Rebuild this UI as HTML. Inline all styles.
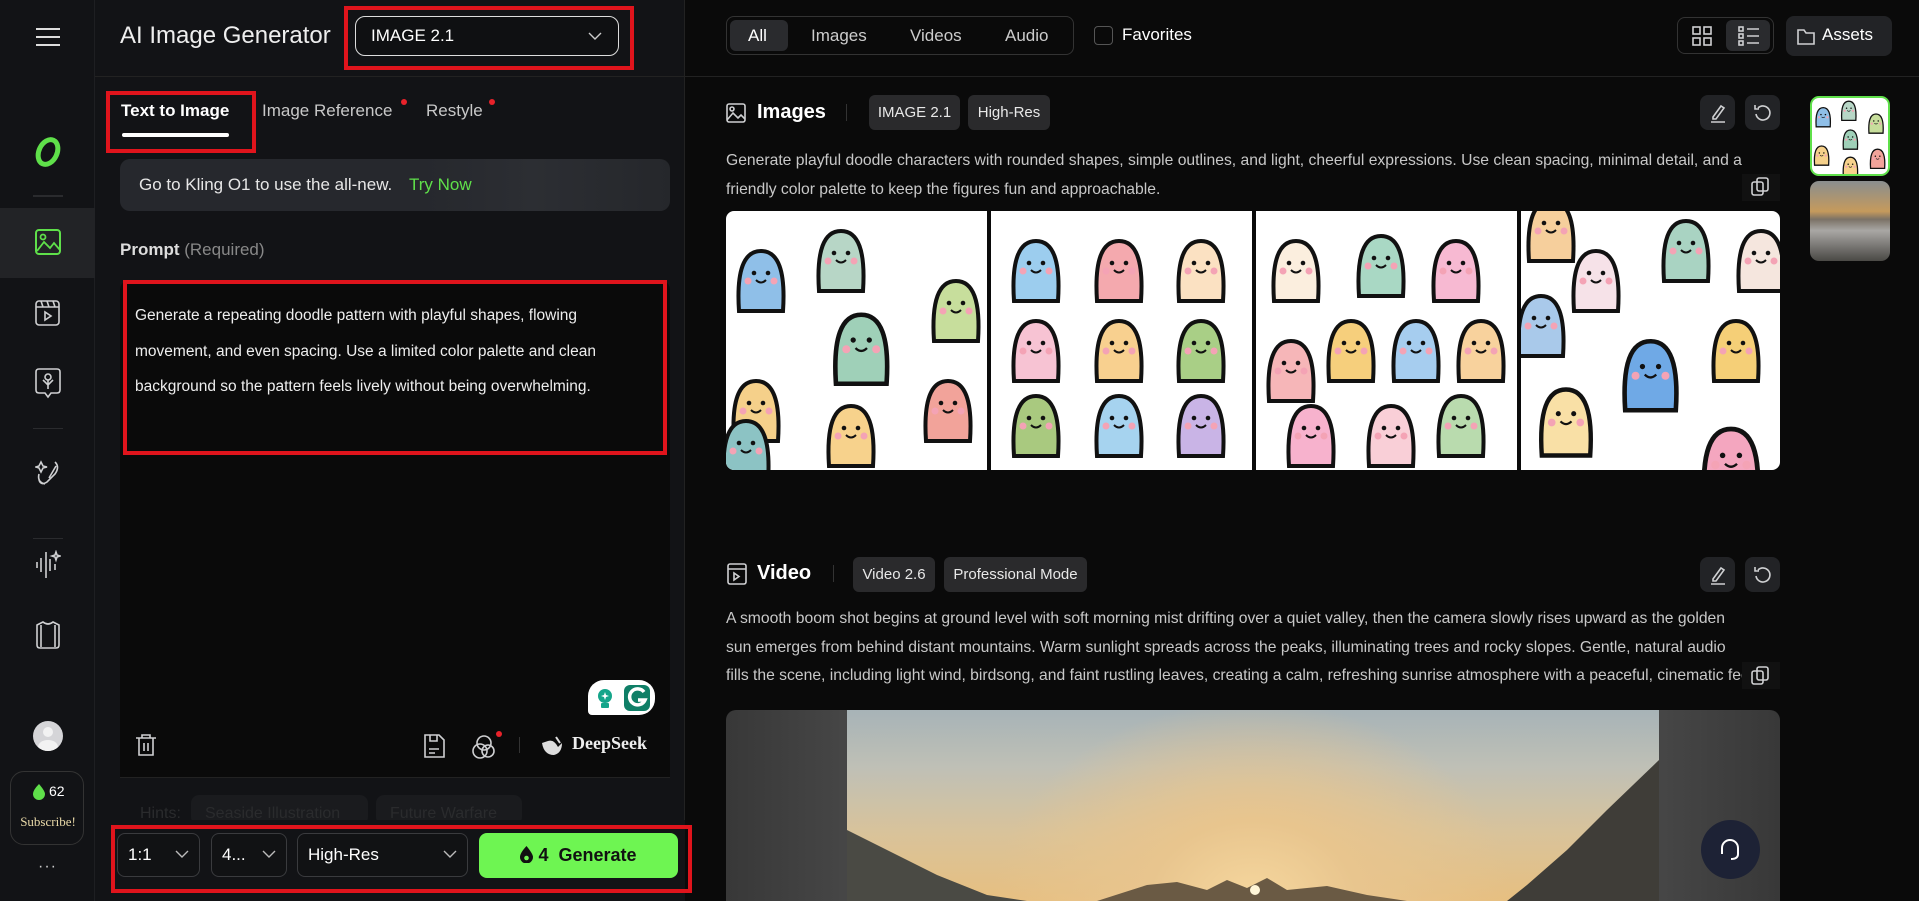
<!DOCTYPE html>
<html><head><meta charset="utf-8">
<style>
*{box-sizing:border-box;margin:0;padding:0}
body{width:1919px;height:901px;overflow:hidden;background:#0a0a0a;font-family:"Liberation Sans",sans-serif;color:#fff;position:relative}
.a{position:absolute}
.side{left:0;top:0;width:95px;height:901px;background:#121316;border-right:1px solid #1e1f22}
.lp{left:95px;top:0;width:590px;height:901px;background:#121316;border-right:1px solid #222}
.red{position:absolute;border:4px solid #e0141c}
.ic{stroke:#cfd0d2;fill:none;stroke-width:1.6}
.tag{position:absolute;background:#2a2a2c;border-radius:6px;color:#e8e8e8;font-size:15px;line-height:35px;text-align:center}
.btn{position:absolute;background:#222326;border-radius:8px}
.sel{position:absolute;top:833px;height:44px;border:1px solid #3a3b3e;border-radius:8px;background:#111214;font-size:17px;color:#fff;line-height:42px;padding-left:10px}
.sel svg{position:absolute;right:10px;top:16px}
.img{position:absolute;top:211px;width:261px;height:259px;background:#fff;overflow:hidden}
</style></head><body>

<!-- sidebar -->
<div class="a side">
 <svg class="a" style="left:35px;top:27px" width="26" height="20"><path d="M1 2H25M1 10H25M1 18H25" stroke="#ddd" stroke-width="2"/></svg>
 <svg class="a" style="left:33px;top:136px" width="30" height="32"><ellipse cx="15" cy="16" rx="9" ry="13" transform="rotate(25 15 16)" fill="none" stroke="#5fe04a" stroke-width="5"/></svg>
 <div class="a" style="left:33px;top:195px;width:30px;height:2px;background:#2a2b2e"></div>
 <div class="a" style="left:0;top:208px;width:95px;height:70px;background:#222326"></div>
 <svg class="a" style="left:35px;top:229px" width="26" height="26"><rect x="1" y="1" width="24" height="24" rx="3" fill="none" stroke="#5fe04a" stroke-width="2"/><circle cx="8" cy="8" r="2.5" fill="none" stroke="#5fe04a" stroke-width="1.8"/><path d="M2 22L9 13L15 19L19 14L25 21" fill="none" stroke="#5fe04a" stroke-width="1.8"/></svg>
 <svg class="a" style="left:35px;top:299px" width="26" height="28"><rect x="1" y="2" width="23" height="24" rx="3" class="ic"/><path d="M1 8H24M6 2L8 8M12 2L14 8M18 2L20 8M10 13V21L16 17Z" class="ic"/></svg>
 <svg class="a" style="left:35px;top:368px" width="26" height="32"><path d="M4 1H22Q25 1 25 4V22Q25 25 22 25H16L13 29L10 25H4Q1 25 1 22V4Q1 1 4 1Z" class="ic"/><circle cx="13" cy="9" r="3" class="ic"/><path d="M13 12V21M8 12L13 17L18 12" class="ic"/></svg>
 <div class="a" style="left:33px;top:428px;width:30px;height:1px;background:#2a2b2e"></div>
 <svg class="a" style="left:35px;top:458px" width="26" height="28"><path d="M6 4L8 8L12 9L8 10L6 14L4 10L1 9L4 8ZM20 4Q25 9 20 16L12 24Q6 28 4 22M14 20L21 8M10 26Q2 24 4 16" class="ic"/></svg>
 <div class="a" style="left:33px;top:538px;width:30px;height:1px;background:#2a2b2e"></div>
 <svg class="a" style="left:35px;top:550px" width="26" height="30"><path d="M2 12V18M6 8V22M11 2V28M15 9V21M20 14V20M21 2L22 5L25 6L22 7L21 10L20 7L17 6L20 5Z" class="ic"/></svg>
 <svg class="a" style="left:35px;top:620px" width="26" height="30"><path d="M8 2Q13 6 18 2L24 5V25Q24 28 21 28H5Q2 28 2 25V5ZM6 5V27M20 5V27" class="ic"/></svg>
 <div class="a" style="left:33px;top:721px;width:30px;height:30px;border-radius:50%;background:#d5d5d8;overflow:hidden"><div class="a" style="left:10px;top:6px;width:10px;height:10px;border-radius:50%;background:#f2f2f2"></div><div class="a" style="left:5px;top:19px;width:20px;height:14px;border-radius:50%;background:#f2f2f2"></div></div>
 <div class="a" style="left:10px;top:771px;width:74px;height:74px;border:1px solid #333;border-radius:14px">
  <svg class="a" style="left:22px;top:12px" width="12" height="16"><path d="M6 0Q12 7 12 10A6 6 0 0 1 0 10Q0 6 6 0Z" fill="#5fe04a"/></svg>
  <div class="a" style="left:38px;top:11px;font-size:14px">62</div>
  <div class="a" style="left:0;width:74px;top:42px;text-align:center;font-family:'Liberation Serif',serif;font-size:13px;color:#e9d9a8">Subscribe!</div>
 </div>
 <div class="a" style="left:38px;top:858px;font-size:16px;letter-spacing:1px;color:#ccc">···</div>
</div>

<!-- left panel -->
<div class="a lp"></div>
<div class="a" style="left:95px;top:76px;width:590px;height:1px;background:#222"></div>
<div class="a" style="left:120px;top:22px;font-size:24px;color:#eee">AI Image Generator</div>
<div class="a" style="left:355px;top:16px;width:264px;height:40px;border:1.5px solid #ddd;border-radius:10px;background:#0f1012;font-size:17px;line-height:37px;padding-left:15px">IMAGE 2.1
 <svg class="a" style="right:16px;top:15px" width="14" height="9"><path d="M1 1L7 7L13 1" stroke="#ccc" fill="none" stroke-width="1.4"/></svg></div>
<div class="red" style="left:344px;top:6px;width:290px;height:64px"></div>

<div class="a" style="left:121px;top:101px;font-size:17px;font-weight:bold">Text to Image</div>
<div class="a" style="left:122px;top:133px;width:107px;height:4px;border-radius:2px;background:#fff"></div>
<div class="red" style="left:106px;top:91px;width:150px;height:62px"></div>
<div class="a" style="left:262px;top:101px;font-size:17px;color:#c8c8c8">Image Reference</div>
<div class="a" style="left:401px;top:99px;width:6px;height:6px;border-radius:50%;background:#e8222a"></div>
<div class="a" style="left:426px;top:101px;font-size:17px;color:#c8c8c8">Restyle</div>
<div class="a" style="left:489px;top:99px;width:6px;height:6px;border-radius:50%;background:#e8222a"></div>

<div class="a" style="left:120px;top:159px;width:550px;height:52px;border-radius:10px;background:linear-gradient(90deg,#26282d 0%,#26282d 55%,#2c2e33 75%,#25272b 100%);font-size:17px;line-height:52px;padding-left:19px;color:#e6e6e6">Go to Kling O1 to use the all-new. <span style="color:#5fe04a;margin-left:12px">Try Now</span></div>

<div class="a" style="left:120px;top:240px;font-size:17px;font-weight:bold;color:#ddd">Prompt <span style="font-weight:normal;color:#888">(Required)</span></div>

<div class="a" style="left:120px;top:280px;width:550px;height:497px;background:#0a0a0a;border-radius:10px 10px 0 0"></div>
<div class="a" style="left:135px;top:298px;width:520px;font-size:15.5px;line-height:35.5px;color:#eee">Generate a repeating doodle pattern with playful shapes, flowing movement, and even spacing. Use a limited color palette and clean background so the pattern feels lively without being overwhelming.</div>
<div class="red" style="left:123px;top:280px;width:544px;height:175px"></div>

<div class="a" style="left:588px;top:680px;width:67px;height:35px;background:#fff;border-radius:16px 16px 16px 4px"></div>
<svg class="a" style="left:594px;top:684px" width="60" height="28"><circle cx="11" cy="12" r="7" fill="#15a58a"/><rect x="7" y="19" width="8" height="5" rx="1" fill="#15a58a"/><path d="M11 8L12 11L15 12L12 13L11 16L10 13L7 12L10 11Z" fill="#fff"/><rect x="30" y="1" width="26" height="26" rx="6" fill="#0f7f67"/><path d="M50 8A8 8 0 1 0 51 16H44" stroke="#fff" stroke-width="3.5" fill="none"/></svg>

<svg class="a" style="left:135px;top:733px" width="22" height="24"><path d="M1 5H21M7 5V2H15V5M4 5V22H18V5M9 10V18M13 10V18" class="ic" stroke-width="1.8"/></svg>
<svg class="a" style="left:423px;top:734px" width="22" height="24"><path d="M2 1H16L21 6V23H2ZM7 1V7H14V1M6 15H16M6 19H12" class="ic" stroke-width="1.8"/></svg>
<svg class="a" style="left:472px;top:734px" width="24" height="26"><circle cx="12" cy="9" r="7" class="ic" stroke-width="1.8"/><circle cx="8" cy="17" r="7" class="ic" stroke-width="1.8"/><circle cx="16" cy="17" r="6" class="ic" stroke-width="1.8"/></svg>
<div class="a" style="left:496px;top:731px;width:6px;height:6px;border-radius:50%;background:#e8222a"></div>
<div class="a" style="left:519px;top:737px;width:1px;height:16px;background:#333"></div>
<svg class="a" style="left:540px;top:735px" width="24" height="22"><path d="M2 8Q4 20 14 20Q22 18 22 8L18 12Q14 4 8 6Q2 8 2 8Z" fill="#ddd"/><path d="M16 2L20 8" stroke="#ddd" stroke-width="2"/></svg>
<div class="a" style="left:572px;top:733px;font-family:'Liberation Serif',serif;font-weight:bold;font-size:18px;color:#eee">DeepSeek</div>

<div class="a" style="left:120px;top:777px;width:550px;height:1px;background:#222"></div>
<div class="a" style="left:140px;top:805px;font-size:16px;color:#2a2b2d">Hints:</div>
<div class="a" style="left:191px;top:795px;width:177px;height:30px;border-radius:8px;background:#1a1b1e;color:#2a2b2d;font-size:16px;padding:10px 14px">Seaside Illustration</div>
<div class="a" style="left:376px;top:795px;width:146px;height:30px;border-radius:8px;background:#1a1b1e;color:#2a2b2d;font-size:16px;padding:10px 14px">Future Warfare</div>
<div class="a" style="left:95px;top:820px;width:590px;height:81px;background:#121316"></div>

<div class="sel" style="left:117px;width:83px">1:1<svg width="14" height="9"><path d="M1 1L7 7L13 1" stroke="#bbb" fill="none" stroke-width="1.4"/></svg></div>
<div class="sel" style="left:211px;width:76px">4...<svg width="14" height="9"><path d="M1 1L7 7L13 1" stroke="#bbb" fill="none" stroke-width="1.4"/></svg></div>
<div class="sel" style="left:297px;width:171px">High-Res<svg width="14" height="9"><path d="M1 1L7 7L13 1" stroke="#bbb" fill="none" stroke-width="1.4"/></svg></div>
<div class="a" style="left:479px;top:833px;width:199px;height:45px;border-radius:8px;background:#6ef552;color:#111;font-weight:bold;font-size:18px;line-height:45px;text-align:center"><svg width="13" height="17" style="vertical-align:-2px"><path d="M6.5 0Q13 8 13 11A6.5 6.5 0 0 1 0 11Q0 7 6.5 0Z" fill="#111"/><circle cx="6.5" cy="12" r="2.3" fill="#6ef552"/></svg> 4&nbsp; Generate</div>
<div class="red" style="left:111px;top:825px;width:581px;height:68px"></div>

<!-- right header -->
<div class="a" style="left:685px;top:76px;width:1234px;height:1px;background:#222"></div>
<div class="a" style="left:726px;top:16px;width:348px;height:39px;border:1px solid #333;border-radius:8px"></div>
<div class="a" style="left:730px;top:20px;width:58px;height:31px;border-radius:6px;background:#2a2b2e"></div>
<div class="a" style="left:748px;top:26px;font-size:17px">All</div>
<div class="a" style="left:811px;top:26px;font-size:17px;color:#ccc">Images</div>
<div class="a" style="left:910px;top:26px;font-size:17px;color:#ccc">Videos</div>
<div class="a" style="left:1005px;top:26px;font-size:17px;color:#ccc">Audio</div>
<div class="a" style="left:1094px;top:26px;width:19px;height:19px;border:1px solid #555;border-radius:4px"></div>
<div class="a" style="left:1122px;top:25px;font-size:17px">Favorites</div>
<div class="a" style="left:1677px;top:17px;width:97px;height:37px;border:1px solid #333;border-radius:8px"></div>
<div class="a" style="left:1726px;top:20px;width:44px;height:31px;border-radius:6px;background:#2a2b2e"></div>
<svg class="a" style="left:1692px;top:26px" width="20" height="20"><rect x="1" y="1" width="7" height="7" class="ic" stroke-width="1.4"/><rect x="12" y="1" width="7" height="7" class="ic" stroke-width="1.4"/><rect x="1" y="12" width="7" height="7" class="ic" stroke-width="1.4"/><rect x="12" y="12" width="7" height="7" class="ic" stroke-width="1.4"/></svg>
<svg class="a" style="left:1738px;top:26px" width="22" height="20"><rect x="1" y="1" width="4" height="4" class="ic" stroke-width="1.3"/><rect x="1" y="8" width="4" height="4" class="ic" stroke-width="1.3"/><rect x="1" y="15" width="4" height="4" class="ic" stroke-width="1.3"/><path d="M9 3H21M9 10H21M9 17H21" class="ic" stroke-width="1.4"/></svg>
<div class="btn" style="left:1786px;top:16px;width:106px;height:40px"></div>
<svg class="a" style="left:1797px;top:28px" width="18" height="17"><path d="M1 2H7L9 5H17V16H1Z" class="ic" stroke-width="1.4"/></svg>
<div class="a" style="left:1822px;top:25px;font-size:17px">Assets</div>

<!-- Images section -->
<svg class="a" style="left:726px;top:103px" width="20" height="20"><rect x="1" y="1" width="18" height="18" rx="2" class="ic" stroke="#fff"/><circle cx="6" cy="6" r="2" class="ic" stroke="#fff"/><path d="M1 17L7 10L12 15L15 12L19 16" class="ic" stroke="#fff"/></svg>
<div class="a" style="left:757px;top:101px;font-size:20px;font-weight:bold">Images</div>
<div class="a" style="left:846px;top:104px;width:1px;height:17px;background:#333"></div>
<div class="tag" style="left:869px;top:95px;width:91px">IMAGE 2.1</div>
<div class="tag" style="left:968px;top:95px;width:82px">High-Res</div>
<div class="btn" style="left:1700px;top:95px;width:35px;height:35px"></div>
<div class="btn" style="left:1745px;top:95px;width:35px;height:35px"></div>
<svg class="a" style="left:1708px;top:103px" width="20" height="20"><path d="M5 14L13 3L16 5L8 16L5 16ZM3 19H17" class="ic" stroke-width="1.4"/></svg>
<svg class="a" style="left:1753px;top:103px" width="20" height="20"><path d="M5 5A7 7 0 1 1 3 11M2 2V6H6" class="ic" stroke-width="1.4"/></svg>
<div class="a" style="left:726px;top:147px;width:1056px;font-size:15.7px;line-height:28.5px;color:#c8c8c8">Generate playful doodle characters with rounded shapes, simple outlines, and light, cheerful expressions. Use clean spacing, minimal detail, and a friendly color palette to keep the figures fun and approachable.</div>
<div class="a" style="left:1742px;top:174px;width:38px;height:27px;background:#111"></div>
<svg class="a" style="left:1751px;top:177px" width="18" height="20"><rect x="6" y="1" width="11" height="13" rx="2" class="ic" stroke-width="1.4"/><rect x="1" y="5" width="11" height="13" rx="2" fill="#111" class="ic" stroke-width="1.4"/></svg>

<svg width="0" height="0" style="position:absolute"><defs>
<g id="ch"><path d="M-22 30Q-26 -30 0 -30Q26 -30 22 30Z" stroke="#111" stroke-width="4"/><circle cx="-7" cy="-8" r="2.3" fill="#111"/><circle cx="7" cy="-8" r="2.3" fill="#111"/><path d="M-5 -1Q0 4 5 -1" stroke="#111" stroke-width="2" fill="none"/><circle cx="-13" cy="0" r="3.5" fill="#f4a3b5"/><circle cx="13" cy="0" r="3.5" fill="#f4a3b5"/></g>
</defs></svg>

<div class="img" style="left:726px;border-radius:8px 0 0 8px"><svg width="261" height="259">
<use href="#ch" x="35" y="70" fill="#8fbfe8"/><use href="#ch" x="115" y="50" fill="#b7d6c6"/><use href="#ch" x="230" y="100" fill="#c7de9c"/><use href="#ch" x="135" y="155" fill="#9fd0b8" transform="translate(-20,-40) scale(1.15)"/><use href="#ch" x="30" y="200" fill="#f5d08a"/><use href="#ch" x="125" y="225" fill="#f7d28c"/><use href="#ch" x="222" y="200" fill="#f2a39a"/><use href="#ch" x="20" y="240" fill="#8cc3c4"/>
</svg></div>
<div class="img" style="left:991px"><svg width="261" height="259">
<use href="#ch" x="45" y="60" fill="#9ccdee"/><use href="#ch" x="128" y="60" fill="#f4a9ae"/><use href="#ch" x="210" y="60" fill="#fbe1c2"/><use href="#ch" x="45" y="140" fill="#f7c3d3"/><use href="#ch" x="128" y="140" fill="#f8d08f"/><use href="#ch" x="210" y="140" fill="#a9cf86"/><use href="#ch" x="45" y="215" fill="#a9c97f"/><use href="#ch" x="128" y="215" fill="#a6d3ef"/><use href="#ch" x="210" y="215" fill="#c9b4e6"/>
</svg></div>
<div class="img" style="left:1256px"><svg width="261" height="259">
<use href="#ch" x="40" y="60" fill="#fbeede"/><use href="#ch" x="125" y="55" fill="#a9d8c4"/><use href="#ch" x="200" y="60" fill="#f7b9d2"/><use href="#ch" x="95" y="140" fill="#f6cf7c"/><use href="#ch" x="160" y="140" fill="#a6cdef"/><use href="#ch" x="225" y="140" fill="#f8d29d"/><use href="#ch" x="35" y="160" fill="#f6b6b8"/><use href="#ch" x="55" y="225" fill="#f7b2cd"/><use href="#ch" x="135" y="225" fill="#f9cfd7"/><use href="#ch" x="205" y="215" fill="#b9dbae"/>
</svg></div>
<div class="img" style="left:1521px;width:259px;border-radius:0 8px 8px 0"><svg width="259" height="259">
<use href="#ch" x="30" y="20" fill="#f6cf9c"/><use href="#ch" x="75" y="70" fill="#f6e2e8"/><use href="#ch" x="165" y="40" fill="#a9d3c2"/><use href="#ch" x="240" y="50" fill="#f5e6de"/><use href="#ch" x="20" y="115" fill="#a9c9ea"/><use href="#ch" x="130" y="165" fill="#6fa9e6" transform="translate(-20,-25) scale(1.15)"/><use href="#ch" x="215" y="140" fill="#f5cf77"/><use href="#ch" x="50" y="215" fill="#f9e0a6" transform="translate(-10,-25) scale(1.1)"/><use href="#ch" x="200" y="245" fill="#f4a6bf" transform="translate(-30,-40) scale(1.2)"/>
</svg></div>

<!-- thumbnails -->
<div class="a" style="left:1810px;top:96px;width:80px;height:80px;border:2px solid #5fe04a;border-radius:9px;background:#fff;overflow:hidden"><svg width="76" height="76"><g transform="scale(0.32)"><use href="#ch" x="35" y="60" fill="#8fbfe8"/><use href="#ch" x="115" y="40" fill="#b7d6c6"/><use href="#ch" x="200" y="80" fill="#c7de9c"/><use href="#ch" x="120" y="130" fill="#9fd0b8"/><use href="#ch" x="30" y="180" fill="#f5d08a"/><use href="#ch" x="120" y="215" fill="#f7d28c"/><use href="#ch" x="205" y="190" fill="#f2a39a"/></g></svg></div>
<div class="a" style="left:1810px;top:181px;width:80px;height:80px;border-radius:9px;background:linear-gradient(180deg,#8a8e8f 0%,#c59a5c 38%,#7b7266 48%,#a9a7a4 62%,#7c7a77 80%,#4a4945 100%)"></div>

<!-- Video section -->
<svg class="a" style="left:727px;top:563px" width="20" height="22"><rect x="1" y="1" width="18" height="20" rx="2" class="ic" stroke="#fff"/><path d="M1 6H19M7 10V17L12 13.5Z" class="ic" stroke="#fff"/></svg>
<div class="a" style="left:757px;top:562px;font-size:20px;font-weight:bold">Video</div>
<div class="a" style="left:833px;top:565px;width:1px;height:17px;background:#333"></div>
<div class="tag" style="left:853px;top:557px;width:82px">Video 2.6</div>
<div class="tag" style="left:944px;top:557px;width:143px">Professional Mode</div>
<div class="btn" style="left:1700px;top:557px;width:35px;height:35px"></div>
<div class="btn" style="left:1745px;top:557px;width:35px;height:35px"></div>
<svg class="a" style="left:1708px;top:565px" width="20" height="20"><path d="M5 14L13 3L16 5L8 16L5 16ZM3 19H17" class="ic" stroke-width="1.4"/></svg>
<svg class="a" style="left:1753px;top:565px" width="20" height="20"><path d="M5 5A7 7 0 1 1 3 11M2 2V6H6" class="ic" stroke-width="1.4"/></svg>
<div class="a" style="left:726px;top:605px;width:1054px;height:86px;overflow:hidden;font-size:15.7px;line-height:28.5px;color:#c8c8c8;white-space:nowrap">A smooth boom shot begins at ground level with soft morning mist drifting over a quiet valley, then the camera slowly rises upward as the golden<br>sun emerges from behind distant mountains. Warm sunlight spreads across the peaks, illuminating trees and rocky slopes. Gentle, natural audio<br>fills the scene, including light wind, birdsong, and faint rustling leaves, creating a calm, refreshing sunrise atmosphere with a peaceful, cinematic feel.</div>
<div class="a" style="left:1742px;top:662px;width:38px;height:27px;background:#111"></div>
<svg class="a" style="left:1751px;top:666px" width="18" height="20"><rect x="6" y="1" width="11" height="13" rx="2" class="ic" stroke-width="1.4"/><rect x="1" y="5" width="11" height="13" rx="2" fill="#111" class="ic" stroke-width="1.4"/></svg>

<div class="a" style="left:726px;top:710px;width:1054px;height:191px;border-radius:10px 10px 0 0;background:linear-gradient(90deg,#383838,#474747 12%,#474747 88%,#383838);overflow:hidden">
 <div class="a" style="left:121px;top:0;width:812px;height:191px;background:radial-gradient(ellipse 260px 200px at 50% 100%,#f6d79e 0%,#e8c58e 40%,rgba(200,190,170,0) 100%),linear-gradient(180deg,#a7b3b7 0%,#bfc0b6 30%,#d9c39a 65%,#e7bf80 100%)"></div>
 <svg class="a" style="left:121px;top:0" width="812" height="191"><path d="M0 120L40 140L90 165L140 185L180 191L0 191Z" fill="#4a4a44"/><path d="M812 50L760 100L720 140L680 175L660 191L812 191Z" fill="#3f3d38"/><path d="M250 191L300 175L330 172L360 180L380 170L400 178L420 168L440 180L480 176L520 185L560 191Z" fill="#6a5a44"/><circle cx="408" cy="180" r="5" fill="#fff6d8"/></svg>
</div>

<div class="a" style="left:1701px;top:820px;width:59px;height:59px;border-radius:50%;background:#1d2235"></div>
<svg class="a" style="left:1719px;top:838px" width="22" height="24"><path d="M3 14V10A8 8 0 0 1 19 10V14M3 12V16M19 12V16M19 16Q19 21 12 21" stroke="#fff" stroke-width="2" fill="none"/></svg>

</body></html>
